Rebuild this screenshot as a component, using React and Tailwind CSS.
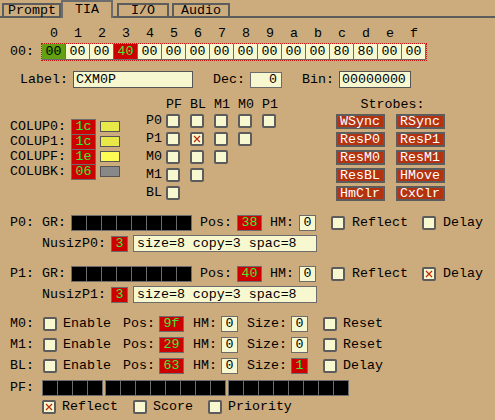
import React from "react";

const cells = ["00", "00", "00", "40", "00", "00", "00", "00", "00", "00", "00", "00", "80", "80", "00", "00"];
const heads = ["0", "1", "2", "3", "4", "5", "6", "7", "8", "9", "a", "b", "c", "d", "e", "f"];

const Check = ({ on }) => (
  <div className="w-[14px] h-[14px] shrink-0 rounded-[2px] border-2 border-[#5c5c5c] bg-[#f8f8d0] flex items-center justify-center">
    {on && (
      <svg width="8" height="8" viewBox="0 0 8 8">
        <path d="M1 1L7 7M7 1L1 7" stroke="#c02808" strokeWidth="1.2" />
      </svg>
    )}
  </div>
);

const Bar = ({ n }) => (
  <div className="flex h-[16px] bg-black border-y border-r border-[#6c6c6c]">
    {[...Array(n)].map((_, i) => (
      <div key={i} className="w-[15px] h-full border-l border-[#6c6c6c]" />
    ))}
  </div>
);

const Red = ({ w, children }) => (
  <div className={`${w} h-[16px] bg-[#cc0000] text-[#33ee33] border border-[#6c6c6c] flex items-center justify-center`}>
    {children}
  </div>
);

const Box = ({ w, children, right }) => (
  <div className={`${w} h-[16px] bg-[#f8f8d0] border border-[#6c6c6c] flex items-center ${right ? "justify-end pr-[4px]" : "justify-center"}`}>
    {children}
  </div>
);

const Strobe = ({ children }) => (
  <div className="w-[49px] h-[15px] border-2 border-[#5c5c5c] bg-[#b3320f] text-white flex items-center pl-[2px]">
    {children}
  </div>
);

const PlayerBlock = ({ p, pos, delay }) => (
  <>
    <div className="flex items-center h-[17px]">
      <div className="ml-[10px] w-[32px]">{p}:</div>
      <div className="w-[29px]">GR:</div>
      <Bar n={8} />
      <div className="ml-[8px] w-[37px]">Pos:</div>
      <Red w="w-[25px]">{pos}</Red>
      <div className="ml-[8px] w-[29px]">HM:</div>
      <Box w="w-[17px]">0</Box>
      <div className="ml-[15px]"><Check /></div>
      <div className="ml-[7px] w-[56px]">Reflect</div>
      <div className="ml-[14px]"><Check on={delay} /></div>
      <div className="ml-[7px]">Delay</div>
    </div>
    <div className="flex items-center h-[17px] mt-[4px]">
      <div className="ml-[42px] w-[69px]">Nusiz{p}:</div>
      <Red w="w-[17px]">3</Red>
      <div className="ml-[5px] w-[184px] h-[17px] bg-[#f8f8d0] border border-[#6c6c6c] flex items-center pl-[3px]">
        size=8 copy=3 spac=8
      </div>
    </div>
  </>
);

const ObjRow = ({ name, pos, size, last }) => (
  <div className="flex items-center h-[16px] mt-[5px] first:mt-0">
    <div className="ml-[10px] w-[33px]">{name}:</div>
    <Check />
    <div className="ml-[6px] w-[48px]">Enable</div>
    <div className="ml-[12px] w-[36px]">Pos:</div>
    <Red w="w-[25px]">{pos}</Red>
    <div className="ml-[9px] w-[28px]">HM:</div>
    <Box w="w-[17px]">0</Box>
    <div className="ml-[9px] w-[44px]">Size:</div>
    {size === "1" ? <Red w="w-[17px]">1</Red> : <Box w="w-[17px]">0</Box>}
    <div className="ml-[15px]"><Check /></div>
    <div className="ml-[6px]">{last}</div>
  </div>
);

export default function App() {
  const colors = [
    ["COLUP0:", "1c", "bg-[#e8e848]"],
    ["COLUP1:", "1c", "bg-[#e8e848]"],
    ["COLUPF:", "1e", "bg-[#fcfc54]"],
    ["COLUBK:", "06", "bg-[#888888]"],
  ];
  const coll = [
    ["P0", 5, -1],
    ["P1", 4, 1],
    ["M0", 3, -1],
    ["M1", 2, -1],
    ["BL", 1, -1],
  ];
  const strobes = ["WSync", "RSync", "ResP0", "ResP1", "ResM0", "ResM1", "ResBL", "HMove", "HmClr", "CxClr"];

  return (
    <div className="w-[495px] h-[420px] overflow-hidden bg-[#ccab7c] font-['Liberation_Mono','DejaVu_Sans_Mono',monospace] text-[13.3px] leading-none text-black">
      {/* tabs */}
      <div className="flex items-end h-[18px]">
        <div className="w-[2px] h-full border-b-2 border-[#5c5c5c]" />
        <div className="w-[59px] h-[15px] border-2 border-[#5c5c5c] flex items-center pl-[4px]">Prompt</div>
        <div className="w-[52px] h-[18px] border-2 border-b-0 border-[#6c6c6c] flex items-center justify-center">TIA</div>
        <div className="w-[4px] h-full border-b-2 border-[#5c5c5c]" />
        <div className="w-[52px] h-[15px] border-2 border-[#5c5c5c] flex items-center justify-center">I/O</div>
        <div className="w-[3px] h-full border-b-2 border-[#5c5c5c]" />
        <div className="w-[58px] h-[15px] border-2 border-[#5c5c5c] flex items-center justify-center">Audio</div>
        <div className="flex-1 h-full border-b-2 border-[#5c5c5c]" />
      </div>

      {/* register row */}
      <div className="flex ml-[42px] mt-[11px] h-[10px] items-center">
        {heads.map((h) => (
          <div key={h} className="w-[24px] text-center">{h}</div>
        ))}
      </div>
      <div className="flex items-center mt-[4px] h-[18px]">
        <div className="ml-[10px] w-[31px]">00:</div>
        <div className="flex border border-dotted border-[#d01010]">
          {cells.map((c, i) => (
            <div
              key={i}
              className={`w-[24px] h-[16px] border-r border-b border-[#6c6c6c] flex items-center justify-center ${
                i === 0 ? "bg-[#63a012]" : i === 3 ? "bg-[#cc0000] text-[#33ee33]" : "bg-[#f8f8d0]"
              }`}
            >
              {c}
            </div>
          ))}
        </div>
      </div>

      {/* label row */}
      <div className="flex items-center mt-[10px] h-[17px]">
        <div className="ml-[20px] w-[48px]">Label:</div>
        <div className="ml-[5px] w-[120px] h-[17px] bg-[#f8f8d0] border border-[#555] flex items-center pl-[2px]">CXM0P</div>
        <div className="ml-[20px] w-[32px]">Dec:</div>
        <div className="ml-[5px]"><Box w="w-[32px]" right>0</Box></div>
        <div className="ml-[20px] w-[32px]">Bin:</div>
        <div className="ml-[5px] w-[72px] h-[17px] bg-[#f8f8d0] border border-[#555] flex items-center pl-[2px]">00000000</div>
      </div>

      {/* colours, collisions, strobes */}
      <div className="flex mt-[9px] h-[106px]">
        <div className="ml-[10px] pt-[22px]">
          {colors.map(([l, v, sw], i) => (
            <div key={l} className="flex items-center h-[15px]">
              <div className="w-[61px]">{l}</div>
              <div
                className={`w-[25px] ${i === 3 ? "h-[16px] border-b" : "h-[15px]"} border-x border-t border-[#6c6c6c] bg-[#cc0000] text-[#33ee33] flex items-center justify-center`}
              >
                {v}
              </div>
              <div className={`ml-[4px] w-[20px] h-[11px] border border-[#555] ${sw}`} />
            </div>
          ))}
        </div>

        <div className="ml-[26px] pt-[2px]">
          <div className="flex items-center h-[12px] ml-[20px]">
            {["PF", "BL", "M1", "M0", "P1"].map((h) => (
              <div key={h} className="w-[24px]">{h}</div>
            ))}
          </div>
          <div className="flex flex-col gap-[4px] mt-[3px]">
            {coll.map(([l, n, x]) => (
              <div key={l} className="flex items-center h-[14px]">
                <div className="w-[20px]">{l}</div>
                <div className="flex gap-[10px]">
                  {[...Array(n)].map((_, i) => (
                    <Check key={i} on={i === x} />
                  ))}
                </div>
              </div>
            ))}
          </div>
        </div>

        <div className="ml-[50px] pt-[2px] w-[109px]">
          <div className="h-[12px] flex items-center justify-center pl-[4px]">Strobes:</div>
          <div className="grid grid-cols-[49px_49px] gap-x-[11px] gap-y-[3px] mt-[3px]">
            {strobes.map((s) => (
              <Strobe key={s}>{s}</Strobe>
            ))}
          </div>
        </div>
      </div>

      {/* players */}
      <div className="mt-[11px]">
        <PlayerBlock p="P0" pos="38" />
      </div>
      <div className="mt-[13px]">
        <PlayerBlock p="P1" pos="40" delay />
      </div>

      {/* missiles / ball */}
      <div className="mt-[13px]">
        <ObjRow name="M0" pos="9f" size="0" last="Reset" />
        <ObjRow name="M1" pos="29" size="0" last="Reset" />
        <ObjRow name="BL" pos="63" size="1" last="Delay" />
      </div>

      {/* playfield */}
      <div className="flex items-center mt-[6px] h-[16px]">
        <div className="ml-[10px] w-[32px]">PF:</div>
        <Bar n={4} />
        <div className="ml-[2px]"><Bar n={8} /></div>
        <div className="ml-[2px]"><Bar n={8} /></div>
      </div>
      <div className="flex items-center mt-[4px] h-[14px]">
        <div className="ml-[42px]"><Check on /></div>
        <div className="ml-[6px] w-[56px]">Reflect</div>
        <div className="ml-[15px]"><Check /></div>
        <div className="ml-[6px] w-[40px]">Score</div>
        <div className="ml-[15px]"><Check /></div>
        <div className="ml-[6px]">Priority</div>
      </div>
    </div>
  );
}
